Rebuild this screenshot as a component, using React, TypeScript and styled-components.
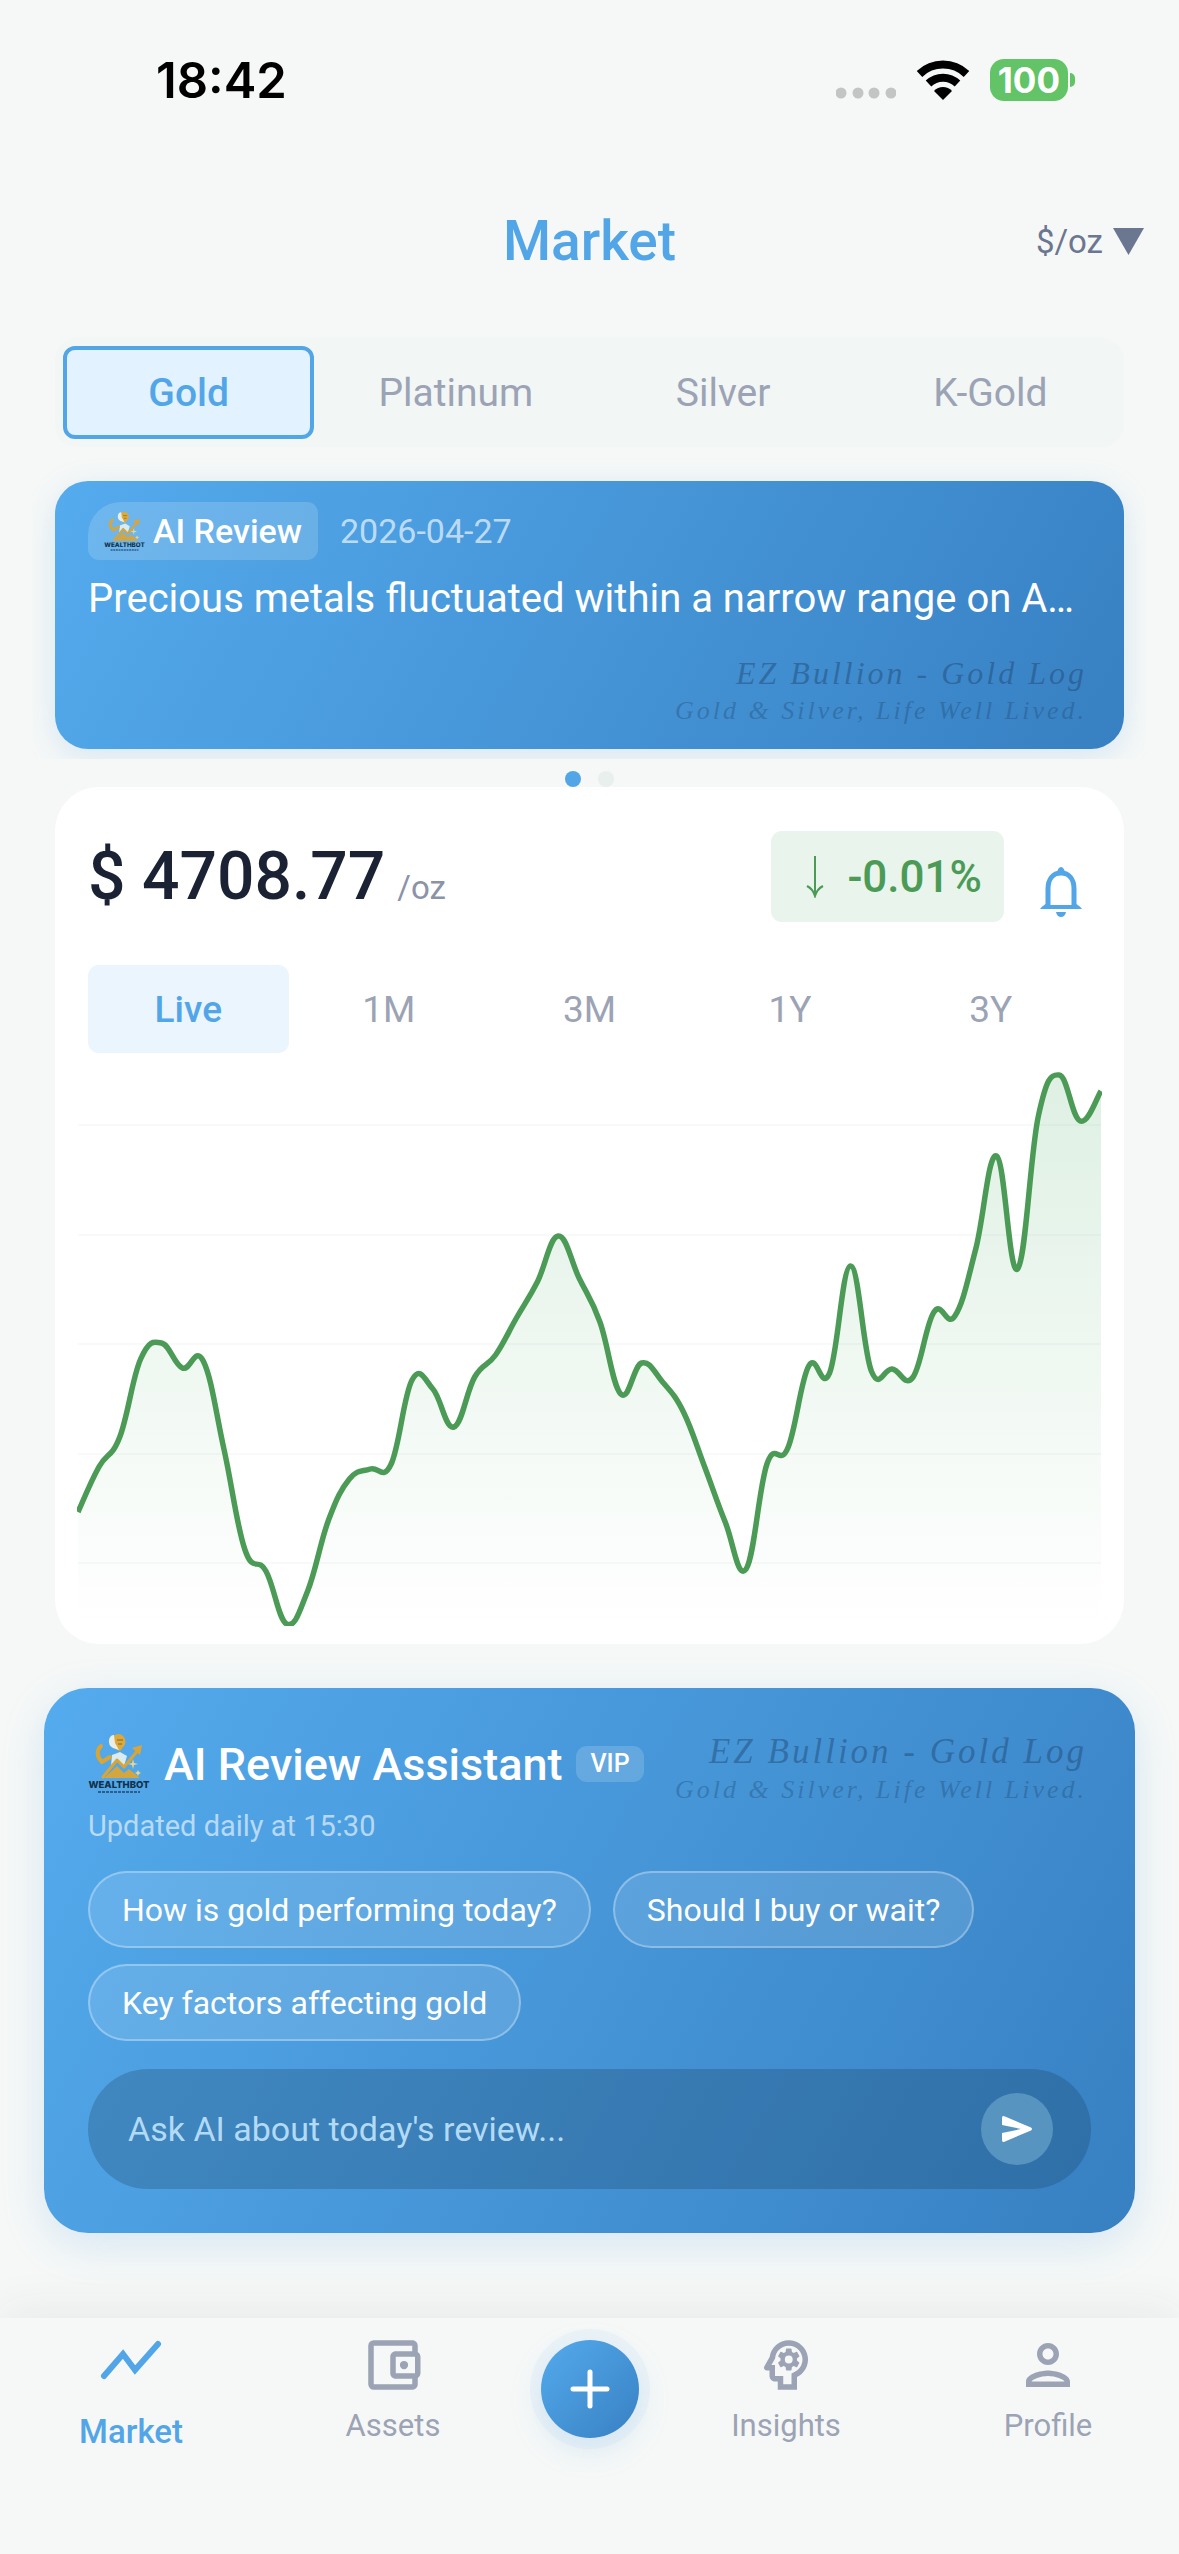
import React, { useState } from "react";
import styled, { createGlobalStyle, css } from "styled-components";
import { MdOutlineAccountBalanceWallet, MdOutlinePerson, MdOutlinePsychology } from "react-icons/md";

const color = {
  page: "#f6f8f7",
  primary: "#52a6e8",
  gradient: "linear-gradient(120deg, #54abed 0%, #3780c2 100%)",
  muted: "#9ba3b5",
  slate: "#6b7690",
  ink: "#1a2233",
  up: "#4b9b57",
};

const GlobalStyle = createGlobalStyle`
  *, *::before, *::after { box-sizing: border-box; }
  body {
    margin: 0;
    background: ${color.page};
    color: ${color.ink};
    font-family: Roboto, "Liberation Sans", sans-serif;
  }
  button, input, select {
    font: inherit;
    color: inherit;
    border: 0;
    padding: 0;
    margin: 0;
    background: none;
  }
  h1, h2, p { margin: 0; font-weight: inherit; }
  svg { display: block; flex: none; }
`;

const Page = styled.div`
  display: flex;
  flex-direction: column;
  min-height: 100vh;
`;

const StatusBar = styled.div`
  display: flex;
  align-items: center;
  justify-content: space-between;
  height: 160px;
  padding: 0 104px 0 156px;
  font-family: Inter, sans-serif;
`;

const Clock = styled.time`
  font-size: 49px;
  font-weight: 600;
  color: #000;
`;

const StatusIcons = styled.div`
  display: flex;
  align-items: center;
  gap: 20px;
`;

const Battery = styled.div`
  display: flex;
  align-items: center;
  gap: 2px;
`;

const BatteryLevel = styled.span`
  padding: 0 8px;
  border-radius: 14px;
  background: #62c466;
  color: #fff;
  font-size: 35px;
  font-weight: 700;
  line-height: 42px;
`;

const BatteryCap = styled.span`
  width: 5px;
  height: 14px;
  border-radius: 0 5px 5px 0;
  background: #62c466;
`;

const Header = styled.header`
  display: grid;
  grid-template-columns: 1fr auto 1fr;
  align-items: center;
  height: 160px;
  padding: 2px 35px 0;
`;

const Title = styled.h1`
  grid-column: 2;
  font-size: 55px;
  font-weight: 500;
  color: ${color.primary};
`;

const UnitPicker = styled.label`
  display: flex;
  align-items: center;
  justify-self: end;
  gap: 10px;
  color: ${color.slate};
  font-size: 33px;
`;

const UnitSelect = styled.select`
  appearance: none;
  field-sizing: content;
`;

const Main = styled.main`
  display: flex;
  flex-direction: column;
  flex: 1;
  padding: 18px 44px 0;
`;

const MetalTabs = styled.div`
  display: grid;
  grid-template-columns: repeat(4, 1fr);
  gap: 16px;
  margin: 0 11px;
  padding: 8px;
  border-radius: 22px;
  background: #f2f6f5;
`;

const MetalTab = styled.button<{ $active: boolean }>`
  height: 93px;
  border: 4px solid transparent;
  border-radius: 12px;
  font-size: 39px;
  color: ${color.muted};
  ${({ $active }) =>
    $active &&
    css`
      border-color: ${color.primary};
      background: #e2f2fe;
      color: ${color.primary};
      font-weight: 500;
    `}
`;

const Carousel = styled.div`
  overflow: hidden;
  margin: 0 -11px;
  padding: 34px 22px 10px;
`;

const ReviewCard = styled.article`
  display: flex;
  flex-direction: column;
  height: 268px;
  padding: 21px 33px 20px;
  border-radius: 33px;
  background: ${color.gradient};
  box-shadow: 0 8px 32px rgba(82, 166, 232, 0.2);
  color: #fff;
`;

const ReviewMeta = styled.div`
  display: flex;
  align-items: center;
  gap: 22px;
  font-size: 34px;
`;

const ReviewBadge = styled.span`
  display: flex;
  align-items: center;
  gap: 8px;
  height: 58px;
  padding: 0 16px;
  border-radius: 33px 11px 11px 11px;
  background: rgba(255, 255, 255, 0.16);
  font-weight: 500;
`;

const ReviewDate = styled.time`
  color: rgba(255, 255, 255, 0.65);
`;

const ReviewText = styled.p`
  margin-top: 14px;
  font-size: 40px;
  line-height: 50px;
`;

const Watermark = styled.div`
  align-self: flex-end;
  margin-top: auto;
  padding-right: 4px;
  color: rgba(26, 60, 100, 0.42);
  font-family: "Liberation Serif", serif;
  font-style: italic;
  text-align: right;
  white-space: nowrap;
`;

const WatermarkName = styled.div<{ $large?: boolean }>`
  font-size: ${({ $large }) => ($large ? "35px" : "32px")};
  letter-spacing: 3px;
  line-height: 40px;
`;

const WatermarkSlogan = styled.div`
  font-size: 26px;
  letter-spacing: 3px;
  line-height: 36px;
  opacity: 0.75;
`;

const Dots = styled.div`
  display: flex;
  justify-content: center;
  gap: 17px;
  height: 28px;
  padding-top: 12px;
`;

const Dot = styled.span<{ $active?: boolean }>`
  width: 16px;
  height: 16px;
  border-radius: 50%;
  background: ${({ $active }) => ($active ? color.primary : "#e8efed")};
`;

const PriceCard = styled.section`
  margin: 0 11px;
  padding: 44px 22px 18px;
  border-radius: 44px;
  background: #fff;
`;

const PriceRow = styled.div`
  display: flex;
  align-items: center;
  padding: 0 20px 0 11px;
`;

const Price = styled.div`
  display: flex;
  align-items: baseline;
  flex: 1;
  gap: 12px;
  font-size: 66px;
  font-weight: 500;
`;

const PriceUnit = styled.span`
  color: #8a93a8;
  font-size: 33px;
  font-weight: 400;
`;

const Change = styled.span`
  display: flex;
  align-items: center;
  gap: 22px;
  height: 91px;
  padding: 0 22px 0 34px;
  border-radius: 11px;
  background: #e8f4ec;
  color: ${color.up};
  font-size: 44px;
  font-weight: 500;
`;

const AlertButton = styled.button`
  margin: 30px 0 0 36px;
  color: ${color.primary};
`;

const RangeTabs = styled.div`
  display: grid;
  grid-template-columns: repeat(5, 1fr);
  margin: 43px 11px 0;
`;

const RangeTab = styled.button<{ $active: boolean }>`
  height: 88px;
  border-radius: 11px;
  font-size: 37px;
  color: ${color.muted};
  ${({ $active }) =>
    $active &&
    css`
      background: #eaf5fe;
      color: ${color.primary};
      font-weight: 500;
    `}
`;

const ChartSvg = styled.svg`
  width: 100%;
  height: auto;
`;

const Assistant = styled.section`
  margin-top: 44px;
  padding: 44px;
  border-radius: 44px;
  background: ${color.gradient};
  box-shadow: 0 12px 44px rgba(82, 166, 232, 0.2);
  color: #fff;
`;

const AssistantHead = styled.div`
  display: flex;
  align-items: flex-start;
  justify-content: space-between;
  height: 72px;
`;

const AssistantTitle = styled.div`
  display: flex;
  align-items: center;
  gap: 14px;
  height: 64px;
`;

const AssistantName = styled.h2`
  font-size: 45px;
  font-weight: 500;
`;

const Vip = styled.span`
  padding: 0 14px;
  border-radius: 11px;
  background: rgba(255, 255, 255, 0.16);
  font-size: 25px;
  font-weight: 500;
  line-height: 36px;
`;

const Updated = styled.p`
  color: rgba(255, 255, 255, 0.6);
  font-size: 29px;
  line-height: 44px;
`;

const Chips = styled.div`
  display: flex;
  flex-wrap: wrap;
  gap: 16px 22px;
  margin-top: 23px;
`;

const Chip = styled.button`
  height: 77px;
  padding: 0 32px;
  border: 2px solid rgba(255, 255, 255, 0.3);
  border-radius: 39px;
  background: rgba(255, 255, 255, 0.12);
  font-size: 32px;
`;

const AskBar = styled.form`
  display: flex;
  align-items: center;
  height: 120px;
  margin-top: 28px;
  padding: 0 38px 0 40px;
  border-radius: 60px;
  background: rgba(25, 55, 85, 0.25);
`;

const AskInput = styled.input`
  flex: 1;
  min-width: 0;
  height: 60px;
  outline: none;
  font-size: 34px;
  &::placeholder {
    color: #b3daf5;
    opacity: 1;
  }
`;

const SendButton = styled.button`
  display: grid;
  place-items: center;
  width: 72px;
  height: 72px;
  border-radius: 50%;
  background: #5795c0;
`;

const TabBar = styled.nav`
  display: grid;
  grid-template-columns: 2fr 2fr 1fr 2fr 2fr;
  height: 236px;
  margin-top: auto;
  background: ${color.page};
  box-shadow: 0 -8px 44px rgba(30, 50, 40, 0.07);
`;

const NavItem = styled.a<{ $active?: boolean }>`
  display: flex;
  flex-direction: column;
  align-items: center;
  gap: 8px;
  padding-top: 14px;
  color: ${({ $active }) => ($active ? color.primary : color.muted)};
  font-size: ${({ $active }) => ($active ? "33px" : "31px")};
  font-weight: ${({ $active }) => ($active ? 500 : 400)};
  line-height: 40px;
  text-decoration: none;
`;

const AddButton = styled.button`
  display: grid;
  place-items: center;
  justify-self: center;
  width: 98px;
  height: 98px;
  margin-top: 22px;
  border-radius: 50%;
  background: linear-gradient(135deg, #54abed, #3780c2);
  box-shadow: 0 0 0 11px rgba(82, 166, 232, 0.06), 0 11px 33px rgba(82, 166, 232, 0.18);
`;

const METALS = ["Gold", "Platinum", "Silver", "K-Gold"];
const RANGES = ["Live", "1M", "3M", "1Y", "3Y"];
const QUESTIONS = [
  "How is gold performing today?",
  "Should I buy or wait?",
  "Key factors affecting gold",
];

const CHART_W = 1025;
const CHART_H = 573;
const SERIES = [
  459, 414, 384, 306, 290, 315, 308, 397, 497, 518, 571, 538, 467, 426, 416, 411, 327, 336, 374, 324,
  302, 265, 229, 183, 225, 269, 341, 310, 329, 359, 413, 469, 516, 411, 395, 313, 320, 213, 318, 316,
  324, 259, 263, 196, 103, 216, 63, 22, 68, 38,
];

const LEFT = 1;
const STEP = (CHART_W - 2) / (SERIES.length - 1);
const SMOOTH = 0.2;

function smoothLine(values: number[]) {
  const pt = (i: number) => {
    const k = Math.min(Math.max(i, 0), values.length - 1);
    return { x: LEFT + k * STEP, y: values[k] };
  };
  let d = `M${pt(0).x} ${pt(0).y}`;
  for (let i = 0; i < values.length - 1; i++) {
    const [a, b, c, e] = [pt(i - 1), pt(i), pt(i + 1), pt(i + 2)];
    d += `C${b.x + (c.x - a.x) * SMOOTH} ${b.y + (c.y - a.y) * SMOOTH} ${c.x - (e.x - b.x) * SMOOTH} ${
      c.y - (e.y - b.y) * SMOOTH
    } ${c.x} ${c.y}`;
  }
  return d;
}

function PriceChart() {
  const line = smoothLine(SERIES);
  return (
    <ChartSvg viewBox={`0 0 ${CHART_W} ${CHART_H}`} role="img" aria-label="Gold price, live">
      <defs>
        <linearGradient id="fill" x1="0" y1="0" x2="0" y2="1">
          <stop offset="0" stopColor="#3fa65a" stopOpacity="0.17" />
          <stop offset="1" stopColor="#3fa65a" stopOpacity="0" />
        </linearGradient>
      </defs>
      {[72, 182, 291, 401, 510].map((y) => (
        <line key={y} x1={LEFT} x2={CHART_W - 1} y1={y} y2={y} stroke="#f8f9f9" strokeWidth="2" />
      ))}
      <path d={`${line}V${CHART_H}H${LEFT}Z`} fill="url(#fill)" />
      <path d={line} fill="none" stroke={color.up} strokeWidth="5.500" />
    </ChartSvg>
  );
}

function BotLogo({ size }: { size: number }) {
  return (
    <svg width={size} height={size} viewBox="0 0 62 62" aria-hidden="true">
      <path d="M16 45L29 33L36 40L41 36L52 45z" fill="#d3a640" />
      <path d="M24 22l8-3 7 4-3 10-7-6-6 6z" fill="#d8ecf2" />
      <g fill="none" stroke="#dba535" strokeLinecap="round" strokeLinejoin="round">
        <path d="M13 13C8 18 9 24 14 29L22 24" strokeWidth="4" />
        <path d="M15 44L29 27L36 34L51 16" strokeWidth="3" />
      </g>
      <path d="M44 15l10-3-2 10z" fill="#dba535" />
      <path d="M24 4q7-6 12 0 3 5 0 9l-4 5q-7-2-8-7z" fill="#dfa93a" />
      <path d="M21 7q1-5 5-5l1 8 4 7-6-2q-5-3-4-8z" fill="#e9efe6" />
      <path d="M29 7h6M30 11h4" stroke="#7d6a32" />
      <path d="M45 26l1 4 4 1-4 1-1 4-1-4-4-1 4-1zM50 37l1 2 2 1-2 1-1 2-1-2-2-1 2-1z" fill="#ecd58d" />
      <text x="31" y="55" textAnchor="middle" textRendering="geometricPrecision" fontFamily="Inter, sans-serif" fontWeight="800" fontSize="9.500" fill="#123047">
        WEALTHBOT
      </text>
      <path d="M10 59h42" stroke="#2c5f85" strokeWidth="2" strokeDasharray="3 1" />
    </svg>
  );
}

function BellIcon() {
  return (
    <svg width="42" height="50" viewBox="0 0 42 50" aria-hidden="true">
      <path d="M8 39V22C8 12 13 6 21 6s13 6 13 16v17" fill="none" stroke="currentColor" strokeWidth="5" />
      <path d="M17 6q1-6 4-6t4 6z" fill="currentColor" />
      <path d="M0 42q1-2 7-6v2h28v-2q6 4 7 6z" fill="currentColor" />
      <path d="M16 45h10q-1 5-5 5t-5-5z" fill="currentColor" />
    </svg>
  );
}

function Brand({ large }: { large?: boolean }) {
  return (
    <Watermark>
      <WatermarkName $large={large}>EZ Bullion - Gold Log</WatermarkName>
      <WatermarkSlogan>Gold &amp; Silver, Life Well Lived.</WatermarkSlogan>
    </Watermark>
  );
}

export default function App() {
  const [metal, setMetal] = useState("Gold");
  const [range, setRange] = useState("Live");

  return (
    <Page>
      <GlobalStyle />
      <StatusBar>
        <Clock>18:42</Clock>
        <StatusIcons>
          <svg width="60" height="40" viewBox="0 0 60 40" fill="#c3c5c4" aria-hidden="true">
            {[5, 22, 38, 55].map((x) => (
              <circle key={x} cx={x} cy="33" r="5.500" />
            ))}
          </svg>
          <svg width="54" height="40" viewBox="0 0 54 40" aria-hidden="true">
            <path d="M27 40l-9-9a12 12 0 0 1 18 0z" fill="#000" />
            <path d="M12.500 23.500a21 21 0 0 1 29 0M3.500 14a34 34 0 0 1 47 0" fill="none" stroke="#000" strokeWidth="8" />
          </svg>
          <Battery>
            <BatteryLevel>100</BatteryLevel>
            <BatteryCap />
          </Battery>
        </StatusIcons>
      </StatusBar>

      <Header>
        <Title>Market</Title>
        <UnitPicker>
          <UnitSelect aria-label="Price unit">
            <option>$/oz</option>
          </UnitSelect>
          <svg width="31" height="27" viewBox="0 0 31 27" fill="currentColor" aria-hidden="true">
            <path d="M0 0h31L15.500 27z" />
          </svg>
        </UnitPicker>
      </Header>

      <Main>
        <MetalTabs role="tablist" aria-label="Metal">
          {METALS.map((m) => (
            <MetalTab key={m} role="tab" aria-selected={m === metal} $active={m === metal} onClick={() => setMetal(m)}>
              {m}
            </MetalTab>
          ))}
        </MetalTabs>

        <Carousel>
          <ReviewCard>
            <ReviewMeta>
              <ReviewBadge>
                <BotLogo size={41} />
                AI Review
              </ReviewBadge>
              <ReviewDate>2026-04-27</ReviewDate>
            </ReviewMeta>
            <ReviewText>Precious metals fluctuated within a narrow range on A…</ReviewText>
            <Brand />
          </ReviewCard>
        </Carousel>
        <Dots>
          <Dot $active />
          <Dot />
        </Dots>

        <PriceCard>
          <PriceRow>
            <Price>
              $ 4708.77 <PriceUnit>/oz</PriceUnit>
            </Price>
            <Change>
              <svg width="20" height="42" viewBox="0 0 20 42" fill="none" stroke="currentColor" strokeWidth="2" aria-hidden="true">
                <path d="M10 0v40M2 30q6 3 8 10q2-7 8-10" />
              </svg>
              -0.01%
            </Change>
            <AlertButton aria-label="Price alert">
              <BellIcon />
            </AlertButton>
          </PriceRow>
          <RangeTabs role="tablist" aria-label="Range">
            {RANGES.map((r) => (
              <RangeTab key={r} role="tab" aria-selected={r === range} $active={r === range} onClick={() => setRange(r)}>
                {r}
              </RangeTab>
            ))}
          </RangeTabs>
          <PriceChart />
        </PriceCard>

        <Assistant>
          <AssistantHead>
            <AssistantTitle>
              <BotLogo size={62} />
              <AssistantName>AI Review Assistant</AssistantName>
              <Vip>VIP</Vip>
            </AssistantTitle>
            <Brand large />
          </AssistantHead>
          <Updated>Updated daily at 15:30</Updated>
          <Chips>
            {QUESTIONS.map((q) => (
              <Chip key={q}>{q}</Chip>
            ))}
          </Chips>
          <AskBar onSubmit={(e) => e.preventDefault()}>
            <AskInput aria-label="Ask AI" placeholder="Ask AI about today's review..." />
            <SendButton aria-label="Send">
              <svg width="32" height="28" viewBox="0 0 32 28" fill="#fff" aria-hidden="true">
                <path d="M1 3Q1 0 4 1.500L30 12.500Q32 14 30 15.500L4 26.500Q1 28 1 25V18L20 14L1 10Z" />
              </svg>
            </SendButton>
          </AskBar>
        </Assistant>
      </Main>

      <TabBar>
        <NavItem href="#market" $active>
          <svg width="72" height="72" viewBox="0 0 72 72" fill="none" stroke="currentColor" strokeWidth="6" strokeLinecap="round" aria-hidden="true">
            <path d="M9 44L28 22L40 38L63 12" />
          </svg>
          Market
        </NavItem>
        <NavItem href="#assets">
          <MdOutlineAccountBalanceWallet size={66} />
          Assets
        </NavItem>
        <AddButton aria-label="Add">
          <svg width="40" height="40" viewBox="0 0 40 40" stroke="#fff" strokeWidth="5" strokeLinecap="round" aria-hidden="true">
            <path d="M20 3v34M3 20h34" />
          </svg>
        </AddButton>
        <NavItem href="#insights">
          <MdOutlinePsychology size={66} />
          Insights
        </NavItem>
        <NavItem href="#profile">
          <MdOutlinePerson size={66} />
          Profile
        </NavItem>
      </TabBar>
    </Page>
  );
}
